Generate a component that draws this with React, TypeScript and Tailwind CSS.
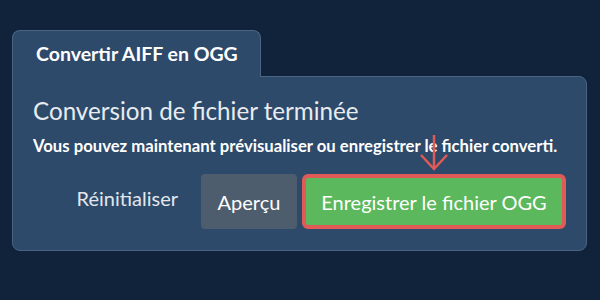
export default function App() {
  return (
    <div className="h-[300px] w-[600px] bg-[#11233a] pl-3 pr-[13px] pt-[30px] font-['Lato',sans-serif]">
      {/* tab */}
      <div className="relative z-10 -mb-px flex h-[47px] w-[249px] items-center rounded-t-lg border border-b-0 border-[#4b6484] bg-[#2d4a6a] pl-[23px]">
        <span className="text-[19.5px] font-bold text-white">Convertir AIFF en OGG</span>
      </div>
      {/* panel */}
      <div className="h-[175px] rounded-tr-lg rounded-b-lg border border-[#4b6484] bg-[#2d4a6a] pl-5 pr-5 pt-5">
        <h2 className="text-[24.2px] leading-7 text-[#e8ecf0]">Conversion de fichier terminée</h2>
        <p className="mt-[11px] text-[16.7px] font-bold leading-5 text-white">
          Vous pouvez maintenant prévisualiser ou enregistrer le fichier converti.
        </p>
        <div className="mt-[18px] flex items-center justify-end gap-[5px]">
          <button className="mb-[7px] mr-[18px] text-xl text-[#e3e7ec]">Réinitialiser</button>
          <button className="h-[55px] w-[96px] rounded bg-[#4e5d6d] text-xl text-white">Aperçu</button>
          <div className="relative">
            <svg
              className="absolute -top-[40px] left-[117px]"
              width="30"
              height="38"
              viewBox="0 0 30 38"
              fill="none"
              stroke="#e05a57"
              strokeWidth="2.5"
            >
              <path d="M15 1 V35" />
              <path d="M2 21 L15 35 L28 21" />
            </svg>
            <button className="h-[55px] w-[264px] rounded-md border-4 border-[#e05a57] bg-[#5cb85c] text-xl text-white">
              Enregistrer le fichier OGG
            </button>
          </div>
        </div>
      </div>
    </div>
  );
}
